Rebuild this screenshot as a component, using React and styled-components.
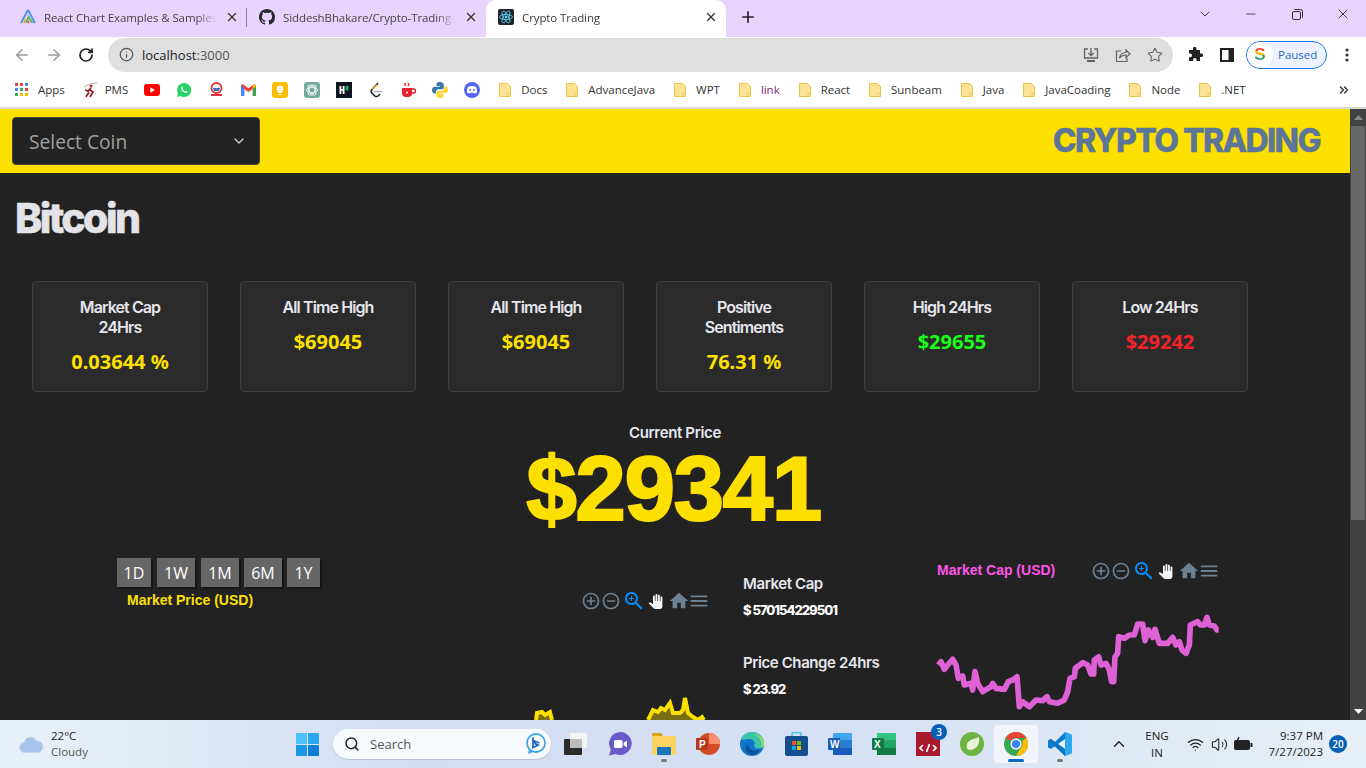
import React from "react";
import styled, { createGlobalStyle } from "styled-components";
import { X, Plus, ArrowLeft, ArrowRight, RotateCw, Info, ChevronDown, ChevronUp, Minus, Search, Star, ChevronsRight, Wifi, Volume2 } from "lucide-react";

const Global = createGlobalStyle`
  html, body { margin: 0; padding: 0; width: 1366px; height: 768px; overflow: hidden; background: #222; }
  * { box-sizing: border-box; }
  h1, h2, h3, p { margin: 0; }
`;
const UI = `"Open Sans", "Noto Sans", sans-serif`;
const Screen = styled.div`width:1366px;height:768px;display:flex;flex-direction:column;overflow:hidden;font-family:${UI};`;

/* browser chrome */
const TabStrip = styled.div`height:37px;background:#e8d3fd;display:flex;align-items:stretch;padding-left:8px;flex:none;`;
const Tab = styled.div`
  width:${p=>p.$w}px;display:flex;align-items:center;padding:0 8px 3px 12px;gap:8px;font-size:11.5px;letter-spacing:-.1px;color:${p=>p.$active?"#3c3c3c":"#444"};
  background:${p=>p.$active?"#fff":"transparent"};border-radius:${p=>p.$active?"10px 10px 0 0":"0"};position:relative;
  ${p=>p.$divider?`&::after{content:"";position:absolute;right:0;top:8px;height:19px;width:1px;background:#8b8296;}`:""}
`;
const TabLabel = styled.span`flex:1;min-width:0;white-space:nowrap;overflow:hidden;-webkit-mask-image:linear-gradient(90deg,#000 88%,transparent);mask-image:linear-gradient(90deg,#000 88%,transparent);`;
const NewTab = styled.div`width:44px;padding-bottom:3px;display:flex;align-items:center;justify-content:center;color:#222;`;
const WindowControls = styled.div`margin-left:auto;display:flex;align-items:flex-start;color:#333;`;
const WinBtn = styled.div`width:46px;height:28px;display:flex;align-items:center;justify-content:center;`;
const Toolbar = styled.div`height:35px;background:#fff;display:flex;align-items:center;padding-left:6px;flex:none;`;
const NavBtn = styled.div`width:32px;display:flex;justify-content:center;color:${p=>p.$dark?"#222":"#999"};`;
const UrlBar = styled.div`width:1065px;flex:none;height:34px;margin-left:6px;border-radius:17px;background:#dfdfdf;display:flex;align-items:center;padding:0 10px 0 11px;font-size:13px;color:#222;`;
const UrlText = styled.span`margin-left:8px;`;
const UrlPort = styled.span`color:#555;`;
const UrlActions = styled.div`margin-left:auto;display:flex;gap:16px;color:#5f6368;align-items:center;`;
const ExtGroup = styled.div`display:flex;align-items:center;margin-left:6px;`;
const ExtBtn = styled.div`width:32px;display:flex;justify-content:center;align-items:center;`;
const Paused = styled.div`width:81px;height:28px;margin-left:3px;border:1px solid #1a73e8;border-radius:14px;background:#edf3fd;display:flex;align-items:center;font-size:11.5px;color:#2a68c8;gap:5px;overflow:hidden;`;
const Avatar = styled.div`width:26px;height:26px;border-radius:50%;background:#fff;display:flex;align-items:center;justify-content:center;`;
const AvatarLetter = styled.span`font:700 17px "Liberation Sans",sans-serif;background:linear-gradient(180deg,#ea4335 0 32%,#fbbc04 32% 52%,#34a853 52% 72%,#4285f4 72%);-webkit-background-clip:text;background-clip:text;color:transparent;`;
const Kebab = styled.div`width:38px;display:flex;justify-content:center;color:#222;margin-left:1px;`;
const BookmarkBar = styled.div`height:37px;background:#fff;border-bottom:2px solid #d9d9d9;display:flex;align-items:center;padding-left:15px;font-size:11.5px;letter-spacing:-.03px;color:#333;flex:none;position:relative;`;
const Bookmark = styled.div`display:flex;align-items:center;gap:${p=>p.$gap??10}px;margin-right:${p=>p.$mr??19}px;white-space:nowrap;color:${p=>p.$color||"#333"};`;
const IconMark = styled.div`width:16px;height:16px;margin-right:16px;display:flex;align-items:center;justify-content:center;`;
const MoreMarks = styled.div`margin-left:auto;width:44px;display:flex;justify-content:center;color:#333;`;

/* page */
const Viewport = styled.div`flex:1;min-height:0;display:flex;`;
const Page = styled.main`width:1350px;background:#222;overflow:hidden;color:#e6e6ea;`;
const Scrollbar = styled.div`width:16px;background:#424242;display:flex;flex-direction:column;align-items:center;`;
const ScrollArrow = styled.div`height:17px;display:flex;align-items:center;justify-content:center;margin-top:${p=>p.$end?"auto":"0"};`;
const ScrollThumb = styled.div`width:14px;height:394px;background:#686868;`;
const Header = styled.header`height:64px;background:#fde000;display:flex;align-items:center;justify-content:space-between;padding:0 30px 0 12px;`;
const SelectBox = styled.div`width:248px;height:48px;background:#222;border:1px solid #444;border-radius:4px;display:flex;align-items:center;justify-content:space-between;padding:0 12px 0 16px;font-size:19.2px;color:#a0a0a0;`;
const Brand = styled.h1`font:800 32px/1 Inter,sans-serif;letter-spacing:-1.6px;color:#5b7699;-webkit-text-stroke:.3px #5b7699;`;
const CoinName = styled.h2`font:800 41px/48px Inter,sans-serif;letter-spacing:-2.6px;color:#e3e3e8;-webkit-text-stroke:.5px #e3e3e8;margin:21px 0 39px 15px;`;
const Cards = styled.section`display:flex;gap:32px;padding-left:32px;`;
const Card = styled.article`width:176px;height:111px;background:#2b2b2b;border:1px solid #3f3f3f;border-radius:4px;padding:15px 12px 0;text-align:center;`;
const CardTitle = styled.h3`font:600 16px/20px Inter,sans-serif;letter-spacing:-.9px;color:#e6e6ee;margin:0 auto;`;
const CardValue = styled.p`font:700 20px/28px "Noto Sans",sans-serif;color:${p=>p.$c||"#fde000"};margin-top:10.5px;`;
const Current = styled.section`text-align:center;margin-top:31px;`;
const CurrentLabel = styled.p`font:600 15px/20px Inter,sans-serif;letter-spacing:-.35px;color:#e6e6ee;`;
const Price = styled.p`font:700 91px/91px "Liberation Sans",sans-serif;letter-spacing:-1.5px;padding-right:3px;color:#fde000;-webkit-text-stroke:2px #fde000;`;
const ChartRow = styled.section`display:flex;align-items:flex-start;margin-top:24px;padding-left:117px;`;
const PriceChart = styled.div`width:593px;flex:none;`;
const RangeRow = styled.div`display:flex;gap:5px;height:29px;`;
const RangeBtn = styled.button`width:${p=>p.$w}px;height:29px;border:0;padding:0;background:#666;color:#fff;font:400 16px "Open Sans",sans-serif;box-shadow:2px 2px 0 #151515;margin-right:${p=>p.$mr||0}px;`;
const ChartHead = styled.div`display:flex;align-items:center;justify-content:space-between;height:${p=>p.$h}px;padding-left:${p=>p.$pl}px;`;
const ChartTitle = styled.span`font:700 14px "Liberation Sans",sans-serif;color:${p=>p.$c};margin-bottom:2px;`;
const Tools = styled.div`display:flex;align-items:center;`;
const ToolIcon = styled.svg`width:${p=>p.$s}px;height:${p=>p.$s}px;fill:${p=>p.$c};flex:none;margin-left:${p=>p.$ml||0}px;`;
const AreaSvg = styled.svg`display:block;width:591px;height:300px;`;
const Stats = styled.div`width:194px;margin-left:33px;padding-top:16px;flex:none;`;
const StatName = styled.h3`font:600 15px/20px Inter,sans-serif;letter-spacing:-.4px;color:#e6e6ee;`;
const StatValue = styled.p`font:800 13px/20px Inter,sans-serif;letter-spacing:-1px;color:#fff;margin:6px 0 33px;`;
const CapChart = styled.div`width:283px;flex:none;`;
const LineSvg = styled.svg`display:block;width:290px;height:110px;margin:26px 0 0 -1px;`;

/* taskbar */
const Taskbar = styled.footer`height:48px;flex:none;display:flex;align-items:center;background:linear-gradient(90deg,#e9f1f8 0%,#d3def4 30%,#d5e0f4 60%,#e7eff7 100%);color:#222;`;
const Weather = styled.div`display:flex;align-items:center;gap:7px;padding-left:19px;width:285px;flex:none;`;
const WeatherText = styled.div`font-size:11.5px;line-height:16px;`;
const Dim = styled.div`color:#555;`;
const Slot = styled.div`width:44px;height:38px;flex:none;display:flex;align-items:center;justify-content:center;position:relative;border-radius:4px;${p=>p.$active?"background:#f1f5fb;":""}`;
const Dot = styled.span`position:absolute;bottom:${p=>p.$b||1}px;left:50%;transform:translateX(-50%);height:3px;border-radius:2px;width:${p=>p.$w||6}px;background:${p=>p.$c||"#777"};`;
const Badge = styled.span`position:absolute;top:${p=>p.$t}px;right:${p=>p.$r}px;width:${p=>p.$s}px;height:${p=>p.$s}px;border-radius:50%;background:#0560b8;color:#fff;font:600 10px/${p=>p.$s}px "Open Sans",sans-serif;text-align:center;`;
const SearchPill = styled.div`width:218px;height:30px;margin:0 3px 0 4px;border-radius:15px;background:#f6f9fd;box-shadow:0 1px 1px #b4c0d4;display:flex;align-items:center;padding:0 5px 0 11px;gap:10px;font-size:13px;color:#555;flex:none;`;
const PillEnd = styled.div`margin-left:auto;display:flex;`;
const Tray = styled.div`margin-left:auto;display:flex;align-items:center;height:100%;padding-right:19px;position:relative;`;
const TrayChevron = styled.div`margin-right:11px;display:flex;`;
const Lang = styled.div`font-size:11.5px;line-height:17px;text-align:center;width:36px;margin:0 8px 0 0;`;
const TrayIcon = styled.div`width:24px;display:flex;justify-content:center;`;
const Clock = styled.div`font-size:11.5px;line-height:16px;text-align:right;margin:0 6px 0 0;width:68px;`;
const Notify = styled.div`width:18px;height:18px;border-radius:50%;background:#0560b8;color:#fff;font-size:10px;font-weight:600;line-height:18px;text-align:center;`;

const Folder = () => (<svg width="12" height="14" viewBox="0 0 12 14"><path d="M.5.5h8l3 3v10H.5z" fill="#fde293" stroke="#eec24a"/><rect x="9" y="10.5" width="2.5" height="3" fill="#fde293" stroke="#eec24a" strokeWidth=".7"/></svg>);
const AppsGrid = () => (<svg width="13" height="13" viewBox="0 0 13 13">{[0,5,10].flatMap((y,i)=>[0,5,10].map((x,j)=><rect key={`${i}${j}`} x={x} y={y} width="3" height="3" fill={[["#ea4335","#ea4335","#4285f4"],["#4285f4","#34a853","#ea4335"],["#34a853","#fbbc04","#fbbc04"]][i][j]}/>))}</svg>);
const AgIcon = () => (<svg width="16" height="16" viewBox="0 0 16 16" fill="none" strokeWidth="1.8"><path d="M1 14 8 1" stroke="#4a90e8"/><path d="M8 1l7 13" stroke="#4a90e8"/><path d="M6 14 8.500 8l4 6" stroke="#55b85c"/><path d="M4 14l2-4" stroke="#e8a33d"/><path d="M9 14l-1-2" stroke="#d55"/></svg>);
const GithubIcon = () => (<svg width="16" height="16" viewBox="0 0 16 16" fill="#24292f"><path d="M8 0C3.580 0 0 3.580 0 8c0 3.540 2.290 6.530 5.470 7.590.4.070.55-.17.55-.38 0-.19-.01-.82-.01-1.490-2.010.37-2.530-.49-2.690-.94-.09-.23-.48-.94-.82-1.130-.28-.15-.68-.52-.01-.53.63-.01 1.080.58 1.230.82.720 1.210 1.870.87 2.330.66.070-.52.28-.87.51-1.070-1.780-.2-3.640-.89-3.640-3.950 0-.87.31-1.590.82-2.150-.08-.2-.36-1.020.08-2.120 0 0 .67-.21 2.200.82.640-.18 1.320-.27 2-.27s1.360.09 2 .27c1.530-1.040 2.200-.82 2.200-.82.440 1.100.16 1.920.08 2.120.51.56.82 1.270.82 2.150 0 3.070-1.870 3.750-3.650 3.950.29.25.54.73.54 1.480 0 1.070-.01 1.930-.01 2.200 0 .21.15.46.55.38A8.010 8.010 0 0 0 16 8c0-4.420-3.580-8-8-8z"/></svg>);
const ReactIcon = () => (<svg width="16" height="16" viewBox="0 0 16 16"><rect width="16" height="16" rx="2" fill="#20232a"/><g fill="none" stroke="#61dafb" strokeWidth=".8"><ellipse cx="8" cy="8" rx="6.500" ry="2.600"/><ellipse cx="8" cy="8" rx="6.500" ry="2.600" transform="rotate(60 8 8)"/><ellipse cx="8" cy="8" rx="6.500" ry="2.600" transform="rotate(120 8 8)"/></g><circle cx="8" cy="8" r="1.400" fill="#61dafb"/></svg>);
const PmsIcon = () => (<svg width="16" height="16" viewBox="0 0 16 16" fill="none"><circle cx="9" cy="4" r="1.600" fill="#a33"/><path d="M9 6 6 9l-3-1M8 8l3 2-3 5M7 10l-3 5" stroke="#8b1a1a" strokeWidth="1.600"/><path d="M2 5c4-3 8-4 13-4" stroke="#999" strokeWidth=".8"/></svg>);
const Youtube = () => (<svg width="16" height="12" viewBox="0 0 16 12"><rect width="16" height="12" rx="3" fill="#f00"/><path d="M6.300 3.200v5.600L11 6z" fill="#fff"/></svg>);
const Whatsapp = () => (<svg width="14" height="14" viewBox="0 0 14 14"><path d="M7 0a7 7 0 0 0-6 10.500L0 14l3.600-1A7 7 0 1 0 7 0z" fill="#25d366"/><path d="M4.800 3.500c-.5.3-1 1-.8 2 .4 2 2.400 4 4.400 4.500 1 .2 1.800-.3 2.100-1 .1-.3 0-.5-.2-.6l-1.400-.7c-.2 0-.4 0-.5.2l-.5.6C7.200 8.100 6 7 5.600 6l.5-.6c.1-.2.1-.4 0-.5l-.6-1.300c-.2-.2-.5-.2-.7-.1z" fill="#fff"/></svg>);
const RedBadge = () => (<svg width="15" height="16" viewBox="0 0 15 16"><circle cx="7.500" cy="6" r="5" fill="none" stroke="#d33" strokeWidth="1.800"/><path d="M4 6h7l-1 3H5z" fill="#3b6fb5"/><path d="M2 13h11" stroke="#d33" strokeWidth="2"/></svg>);
const Gmail = () => (<svg width="15" height="12" viewBox="0 0 15 12"><path d="M0 1.500V12h3.200V5l4.300 3L11.800 5v7H15V1.500L13.500 0 7.500 4.300 1.500 0z" fill="#ea4335"/><path d="M0 1.500V12h3.200V4z" fill="#4285f4"/><path d="M15 1.500V12h-3.200V4z" fill="#34a853"/><path d="M11.800 5 15 2.500 13.500 0 11.800 1.200z" fill="#fbbc04"/></svg>);
const Keep = () => (<svg width="16" height="16" viewBox="0 0 16 16"><rect width="16" height="16" rx="3" fill="#fbbc04"/><path d="M8 3.500a3.500 3.500 0 0 0-2 6.400V11h4V9.900a3.500 3.500 0 0 0-2-6.400zM6.500 12h3v1h-3z" fill="#fff"/></svg>);
const Gpt = () => (<svg width="16" height="16" viewBox="0 0 16 16"><rect width="16" height="16" rx="3" fill="#74aa9c"/><g fill="none" stroke="#e8f3f0" strokeWidth="1"><ellipse cx="8" cy="8" rx="5.500" ry="2.800"/><ellipse cx="8" cy="8" rx="5.500" ry="2.800" transform="rotate(60 8 8)"/><ellipse cx="8" cy="8" rx="5.500" ry="2.800" transform="rotate(120 8 8)"/></g></svg>);
const Hacker = () => (<svg width="16" height="16" viewBox="0 0 16 16"><rect width="16" height="16" fill="#0e141e"/><path d="M3.500 4h1.800v3h1.400V4h1.800v8H6.700V8.800H5.300V12H3.500z" fill="#fff"/><rect x="9.500" y="4" width="3" height="4.500" fill="#1ba94c"/></svg>);
const Leet = () => (<svg width="15" height="16" viewBox="0 0 15 16" fill="none"><path d="M9 1 3 7.500c-1 1.200-1 2.800 0 3.800l2.500 2.500c1 1 2.800 1 3.800 0L11 12" stroke="#222" strokeWidth="1.600"/><path d="M5 9.500h8" stroke="#aaa" strokeWidth="1.400"/><path d="M3 7 8 3" stroke="#f89f1b" strokeWidth="1.600"/></svg>);
const Cup = () => (<svg width="15" height="16" viewBox="0 0 15 16"><path d="M1 6h10v5a4 4 0 0 1-4 4H5a4 4 0 0 1-4-4z" fill="#e8212e"/><path d="M11 7h1.500a1.700 1.700 0 0 1 0 4H11" fill="none" stroke="#e8212e" strokeWidth="1.500"/><path d="M4 1v3M7.500 1v3" stroke="#e8212e" strokeWidth="1.500"/><path d="M5 10.500h2M6 9.500v2" stroke="#fff" strokeWidth="1"/></svg>);
const Python = () => (<svg width="16" height="16" viewBox="0 0 16 16"><path d="M8 0C4.500 0 4.500 1.500 4.500 2.500V4H8v.7H3C1 4.700 0 6 0 8s1 3.500 2.700 3.500H4V9.700c0-1.400 1.200-2.500 2.500-2.500H10c1 0 1.700-.8 1.700-1.700V2.500C11.700 1 10 0 8 0z" fill="#3776ab"/><path d="M8 16c3.500 0 3.500-1.500 3.500-2.500V12H8v-.7h5c2 0 3-1.300 3-3.300s-1-3.500-2.700-3.500H12v1.800c0 1.400-1.200 2.500-2.500 2.500H6c-1 0-1.700.8-1.700 1.700v3C4.300 15 6 16 8 16z" fill="#ffd43b"/></svg>);
const Discord = () => (<svg width="16" height="16" viewBox="0 0 16 16"><circle cx="8" cy="8" r="8" fill="#5865f2"/><path d="M4 5c2.500-1.200 5.500-1.200 8 0 1 2 1.200 4 1 5.500-1 .7-2 1-2.700 1.200l-.6-1H6.300l-.6 1C5 11.500 4 11.200 3 10.500 2.800 9 3 7 4 5z" fill="#fff"/><circle cx="6.200" cy="8" r="1" fill="#5865f2"/><circle cx="9.800" cy="8" r="1" fill="#5865f2"/></svg>);
const DownloadPc = () => (<svg width="16" height="16" viewBox="0 0 16 16" fill="none" stroke="#5f6368" strokeWidth="1.300"><path d="M5 2H1.500v9h13V2H11"/><path d="M8 1v7M5.500 6 8 8.500 10.500 6"/><path d="M4 14h8" strokeWidth="2"/></svg>);
const ShareBox = () => (<svg width="16" height="16" viewBox="0 0 16 16" fill="none" stroke="#5f6368" strokeWidth="1.200"><path d="M6 4H1.500v10.500H12V11"/><path d="M4.500 11c.5-3.500 3-5.500 6.500-5.500V3l4 4-4 3.500V8c-3 0-5 1-6.500 3z"/></svg>);
const Puzzle = () => (<svg width="16" height="16" viewBox="0 0 16 16" fill="#222"><path d="M6 1.500a1.700 1.700 0 0 1 3.400 0V3H13v3.500h1.300a1.800 1.800 0 0 1 0 3.600H13V14H9.500v-1.300a1.700 1.700 0 0 0-3.400 0V14H2v-3.800h1.200a1.800 1.800 0 0 0 0-3.600H2V3h4z"/></svg>);
const SidePanel = () => (<svg width="14" height="14" viewBox="0 0 14 14"><rect width="14" height="14" fill="#222"/><rect x="2" y="2" width="6.500" height="10" fill="#fff"/></svg>);
const Dots = () => (<svg width="4" height="14" viewBox="0 0 4 14" fill="#333"><circle cx="2" cy="2" r="1.600"/><circle cx="2" cy="7" r="1.600"/><circle cx="2" cy="12" r="1.600"/></svg>);
const Restore = () => (<svg width="11" height="11" viewBox="0 0 11 11" fill="none" stroke="#333"><rect x=".5" y="2.500" width="8" height="8" rx="1.500"/><path d="M2.500 .5h6a2 2 0 0 1 2 2v6"/></svg>);
const Tri = ({up}) => (<svg width="9" height="5" viewBox="0 0 9 5"><path d={up?"M0 5 4.500 0 9 5z":"M0 0h9L4.500 5z"} fill={up?"#8a8a8a":"#fff"}/></svg>);

const Cloud = () => (<svg width="25" height="17" viewBox="0 0 25 17"><path d="M6 16.500a5 5 0 0 1-.8-10A6.500 6.500 0 0 1 17.500 5a5.300 5.300 0 0 1 1.500 11.500z" fill="#a9c4ec" stroke="#c5d8f3"/></svg>);
const WinLogo = () => (<svg width="23" height="23" viewBox="0 0 23 23">{[[0,0,"#4cc2f8"],[12,0,"#29a8ef"],[0,12,"#1b97e6"],[12,12,"#0a7fd8"]].map(([x,y,c])=><rect key={x+"-"+y} x={x} y={y} width="11" height="11" fill={c} rx=".5"/>)}</svg>);
const Bing = () => (<svg width="21" height="22" viewBox="0 0 21 22"><circle cx="11" cy="10" r="9" fill="#fff" stroke="#3fa6ea" strokeWidth="1.800"/><path d="M8 4.500v10l5-2.500-2.500-1.200-1-2.800 5 2" fill="none" stroke="#1666c9" strokeWidth="1.800"/><path d="M4 16l-1 5 5-2z" fill="#3fa6ea"/></svg>);
const TaskView = () => (<svg width="24" height="22" viewBox="0 0 24 22"><rect x="6" y="0" width="17" height="15" rx="1" fill="#f5f5f5"/><rect x="0" y="6" width="18" height="16" rx="1" fill="#2a2a2a"/><rect x="6" y="6" width="12" height="9" fill="#bdbdbd"/></svg>);
const Teams = () => (<svg width="24" height="24" viewBox="0 0 24 24"><path d="M12.500 0a11.500 11.500 0 1 1-5 22L1 23.500l1.800-6A11.500 11.500 0 0 1 12.500 0z" fill="#6a5bc9"/><rect x="6" y="8" width="8.500" height="8" rx="1.500" fill="#fff"/><path d="M15.500 11l3.500-2.500v7L15.500 13z" fill="#fff"/></svg>);
const Explorer = () => (<svg width="24" height="22" viewBox="0 0 24 22"><path d="M0 1.500A1.500 1.500 0 0 1 1.500 0H9l2 3H0z" fill="#d9a00f"/><path d="M0 3h24v17.500a1.500 1.500 0 0 1-1.500 1.500h-21A1.500 1.500 0 0 1 0 20.500z" fill="#fcd462"/><rect x="5" y="14" width="14" height="8" rx="1" fill="#1a73bd"/></svg>);
const Ppt = () => (<svg width="24" height="24" viewBox="0 0 24 24"><circle cx="13" cy="12" r="11" fill="#d24c27"/><path d="M13 1a11 11 0 0 1 11 11H13z" fill="#ff8f6b"/><rect x="0" y="6" width="12" height="12" rx="1" fill="#b7381a"/><text x="3" y="15.500" fill="#fff" fontSize="10" fontWeight="700" fontFamily="Liberation Sans">P</text></svg>);
const Edge = () => (<svg width="24" height="24" viewBox="0 0 24 24"><circle cx="12" cy="12" r="12" fill="#1173c8"/><path d="M1 8C3 2 8 0 12 0c6 0 12 4 12 12 0 4-4 5-6.500 4.500C14 16 13 13 15 12c0-3-3-5-6-5-3 0-6 1-8 1z" fill="#3cc6a8"/><path d="M14 2c5 0 10 4 10 10 0 2-1 3.500-3 4 2-4 0-11-7-14z" fill="#8ee05e"/><path d="M8 12c0 5 5 8 10 6l1 1c-2 3-7 5-11 2-3-2-3-7 0-9z" fill="#0c4f94"/></svg>);
const Store = () => (<svg width="23" height="24" viewBox="0 0 23 24"><path d="M7 4V2a1.500 1.500 0 0 1 1.500-1.500h6A1.500 1.500 0 0 1 16 2v2" fill="none" stroke="#3fc4e8" strokeWidth="1.500"/><rect y="4" width="23" height="20" rx="2" fill="#124f8c"/><rect x="7" y="9" width="4" height="4" fill="#f25022"/><rect x="12" y="9" width="4" height="4" fill="#7fba00"/><rect x="7" y="14" width="4" height="4" fill="#00a4ef"/><rect x="12" y="14" width="4" height="4" fill="#ffb900"/></svg>);
const Office = ({a,b,c,d,l}) => (<svg width="24" height="22" viewBox="0 0 24 22"><rect x="5" width="19" height="22" rx="1" fill={a}/><rect x="5" y="7" width="19" height="8" fill={b}/><rect x="5" y="15" width="19" height="7" fill={c}/><rect y="5" width="12" height="12" rx="1" fill={d}/><text x="2" y="15" fill="#fff" fontSize="10" fontWeight="700" fontFamily="Liberation Sans">{l}</text></svg>);
const DevIcon = () => (<svg width="24" height="24" viewBox="0 0 24 24"><rect width="24" height="24" fill="#a6192e"/><path d="M7 13l-3 3 3 3M17 13l3 3-3 3M13.500 12l-3 8" fill="none" stroke="#fff" strokeWidth="1.700"/></svg>);
const Spring = () => (<svg width="24" height="24" viewBox="0 0 24 24"><circle cx="12" cy="12" r="12" fill="#6db33f"/><path d="M19 5c1 6-1 12-9 13-3 0-4-3-3-6 1-4 7-5 12-7z" fill="#e8f3dc"/></svg>);
const Chrome = () => (<svg width="24" height="24" viewBox="0 0 24 24"><circle cx="12" cy="12" r="12" fill="#34a853"/><path d="M12 0a12 12 0 0 1 10.400 6H12a6 6 0 0 0-5.200 3L1.600 6A12 12 0 0 1 12 0z" fill="#ea4335"/><path d="M22.400 6A12 12 0 0 1 12 24l5.200-9A6 6 0 0 0 18 9z" fill="#fbbc04"/><circle cx="12" cy="12" r="5.500" fill="#fff"/><circle cx="12" cy="12" r="4.300" fill="#4285f4"/></svg>);
const Vscode = () => (<svg width="24" height="24" viewBox="0 0 24 24"><path d="M17 0 7 10 3 7 0 8.500v7L3 17l4-3 10 10 7-3V3z" fill="#0a7fd0"/><path d="M17 0l7 3v18l-7 3z" fill="#2ba8ee"/><path d="M17 7 10 12l7 5z" fill="#e7eff7"/><path d="M0 8.500 3 7l14 10v7z" fill="#0a6cb5" opacity=".6"/></svg>);
const Battery = () => (<svg width="20" height="14" viewBox="0 0 20 14"><rect x="1" y="3" width="16" height="10" rx="2" fill="#222"/><rect x="17.500" y="6" width="2" height="4" fill="#222"/><path d="M6 0 3 6h3L4 10" stroke="#222" fill="none" strokeWidth="1.400"/></svg>);

const PLUS="M13 7h-2v4H7v2h4v4h2v-4h4v-2h-4V7zm-1-5C6.480 2 2 6.480 2 12s4.480 10 10 10 10-4.480 10-10S17.520 2 12 2zm0 18c-4.410 0-8-3.590-8-8s3.590-8 8-8 8 3.590 8 8-3.590 8-8 8z";
const MINUS="M7 11v2h10v-2H7zm5-9C6.480 2 2 6.480 2 12s4.480 10 10 10 10-4.480 10-10S17.520 2 12 2zm0 18c-4.410 0-8-3.590-8-8s3.590-8 8-8 8 3.590 8 8-3.590 8-8 8z";
const ZOOM="M15.500 14h-.79l-.28-.27C15.410 12.590 16 11.110 16 9.500 16 5.910 13.090 3 9.500 3S3 5.910 3 9.500 5.910 16 9.500 16c1.610 0 3.090-.59 4.230-1.570l.27.28v.79l5 4.990L20.490 19l-4.990-5zm-6 0C7.010 14 5 11.990 5 9.500S7.010 5 9.500 5 14 7.010 14 9.500 11.990 14 9.500 14zM12 10h-2v2H9v-2H7V9h2V7h1v2h2v1z";
const HAND="M23 5.500V20c0 2.200-1.800 4-4 4h-7.300c-1.080 0-2.100-.43-2.850-1.190L1 14.830s1.260-1.230 1.300-1.250c.22-.19.490-.29.790-.29.220 0 .420.060.600.160.040.010 4.310 2.460 4.310 2.460V4c0-.83.670-1.500 1.500-1.500S11 3.170 11 4v7h1V1.500c0-.83.670-1.500 1.500-1.500S15 .67 15 1.500V11h1V2.500c0-.83.670-1.500 1.500-1.500s1.500.67 1.500 1.500V11h1V5.500c0-.83.670-1.500 1.500-1.500s1.500.67 1.500 1.500z";
const HOME="M10 20v-6h4v6h5v-8h3L12 3 2 12h3v8z";
const MENU="M3 18h18v-2H3v2zm0-5h18v-2H3v2zm0-7v2h18V6H3z";
const ChartTools = () => (
  <Tools>
    <ToolIcon $s={20} $c="#6e8192" viewBox="0 0 24 24"><path d={PLUS}/></ToolIcon>
    <ToolIcon $s={20} $c="#6e8192" viewBox="0 0 24 24"><path d={MINUS}/></ToolIcon>
    <ToolIcon $s={24} $c="#008ffb" viewBox="0 0 24 24" $ml={1}><path d={ZOOM}/></ToolIcon>
    <ToolIcon $s={15} $c="#f4f4f4" viewBox="0 0 24 24" $ml={2}><path d={HAND}/></ToolIcon>
    <ToolIcon $s={22} $c="#6e8192" viewBox="0 0 24 24" $ml={5.5}><path d={HOME}/></ToolIcon>
    <ToolIcon $s={22} $c="#6e8192" viewBox="0 0 24 24" $ml={-2}><path d={MENU}/></ToolIcon>
  </Tools>
);

const cap=[[52,345],[60,335],[70,358],[80,345],[95,328],[105,345],[112,385],[125,378],[130,405],[150,400],[155,420],[162,365],[170,400],[185,425],[210,410],[215,400],[225,415],[250,418],[262,395],[275,390],[288,380],[295,470],[305,455],[325,470],[345,450],[365,452],[378,440],[385,455],[410,460],[430,450],[440,425],[447,385],[460,380],[463,355],[485,338],[500,345],[510,372],[518,372],[520,330],[533,320],[540,345],[555,340],[565,360],[572,395],[578,395],[582,320],[590,310],[593,260],[610,265],[625,255],[640,255],[650,222],[665,222],[672,272],[682,240],[695,262],[702,238],[715,280],[740,280],[755,262],[765,285],[775,275],[783,300],[795,310],[805,285],[808,225],[830,215],[838,225],[850,225],[858,202],[865,225],[880,228],[888,240],[893,240]].map(p=>p.join(",")).join(" ");
const seriesA="419,105 420,98 425,97 428,100 433,97 435,105";
const seriesB="531,105 536,95 541,97 544,93 548,95 553,88 556,98 563,98 566,95 568,83 571,98 576,102 581,105 585,102 587,105";

const cards=[
  {t:["Market Cap","24Hrs"],v:"0.03644 %"},
  {t:["All Time High"],v:"$69045"},
  {t:["All Time High"],v:"$69045"},
  {t:["Positive","Sentiments"],v:"76.31 %"},
  {t:["High 24Hrs"],v:"$29655",c:"#1aff1a"},
  {t:["Low 24Hrs"],v:"$29242",c:"#f6222a"},
];
const folders=[["Docs"],["AdvanceJava"],["WPT"],["link","#7b1f7b"],["React"],["Sunbeam"],["Java"],["JavaCoading"],["Node"],[".NET"]];
const marks=[Youtube,Whatsapp,RedBadge,Gmail,Keep,Gpt,Hacker,Leet,Cup,Python,Discord];
const ranges=[["1D",34,1],["1W",38,1],["1M",38,0],["6M",38,0],["1Y",33,0]];

export default function App(){
  return (<>
    <Global/>
    <Screen>
      <TabStrip>
        <Tab $w={239} $divider><AgIcon/><TabLabel>React Chart Examples &amp; Samples Docs</TabLabel><X size={14} color="#333" strokeWidth={2.2}/></Tab>
        <Tab $w={239}><GithubIcon/><TabLabel>SiddeshBhakare/Crypto-Trading-Web</TabLabel><X size={14} color="#333" strokeWidth={2.2}/></Tab>
        <Tab $w={240} $active><ReactIcon/><TabLabel>Crypto Trading</TabLabel><X size={14} color="#333" strokeWidth={2.2}/></Tab>
        <NewTab><Plus size={18} strokeWidth={2.2}/></NewTab>
        <WindowControls>
          <WinBtn><ChevronDown size={16} strokeWidth={1.4}/></WinBtn>
          <WinBtn><Minus size={14} strokeWidth={1.4}/></WinBtn>
          <WinBtn><Restore/></WinBtn>
          <WinBtn><X size={16} strokeWidth={1.4}/></WinBtn>
        </WindowControls>
      </TabStrip>
      <Toolbar>
        <NavBtn><ArrowLeft size={18}/></NavBtn>
        <NavBtn><ArrowRight size={18}/></NavBtn>
        <NavBtn $dark><RotateCw size={16} strokeWidth={2.6}/></NavBtn>
        <UrlBar>
          <Info size={15} color="#555"/>
          <UrlText>localhost<UrlPort>:3000</UrlPort></UrlText>
          <UrlActions><DownloadPc/><ShareBox/><Star size={16} strokeWidth={1.6}/></UrlActions>
        </UrlBar>
        <ExtGroup>
          <ExtBtn><Puzzle/></ExtBtn>
          <ExtBtn><SidePanel/></ExtBtn>
          <Paused><Avatar><AvatarLetter>S</AvatarLetter></Avatar>Paused</Paused>
          <Kebab><Dots/></Kebab>
        </ExtGroup>
      </Toolbar>
      <BookmarkBar>
        <Bookmark $mr={17}><AppsGrid/>Apps</Bookmark>
        <Bookmark $mr={16} $gap={7}><PmsIcon/><span>PMS</span></Bookmark>
        {marks.map((M,i)=><IconMark key={i}><M/></IconMark>)}
        <Bookmark $mr={3}/>
        {folders.map(([f,c])=><Bookmark key={f} $color={c}><Folder/>{f}</Bookmark>)}
        <MoreMarks><ChevronsRight size={14} strokeWidth={2.4}/></MoreMarks>
      </BookmarkBar>
      <Viewport>
        <Page>
          <Header>
            <SelectBox>Select Coin<ChevronDown size={16} color="#ccc"/></SelectBox>
            <Brand>CRYPTO TRADING</Brand>
          </Header>
          <CoinName>Bitcoin</CoinName>
          <Cards>
            {cards.map((c,i)=>(
              <Card key={i}>
                <CardTitle>{c.t.map(l=><div key={l}>{l}</div>)}</CardTitle>
                <CardValue $c={c.c}>{c.v}</CardValue>
              </Card>
            ))}
          </Cards>
          <Current>
            <CurrentLabel>Current Price</CurrentLabel>
            <Price>$29341</Price>
          </Current>
          <ChartRow>
            <PriceChart>
              <RangeRow>{ranges.map(([r,w,m])=><RangeBtn key={r} $w={w} $mr={m}>{r}</RangeBtn>)}</RangeRow>
              <ChartHead $h={28} $pl={10}>
                <ChartTitle $c="#fde000">Market Price (USD)</ChartTitle>
                <ChartTools/>
              </ChartHead>
              <AreaSvg viewBox="0 0 591 300">
                <path d={`M${seriesA} V300 H419Z`} fill="#fde000" fillOpacity=".4" stroke="none"/>
                <path d={`M${seriesB} V300 H531Z`} fill="#fde000" fillOpacity=".4" stroke="none"/>
                <polyline points={seriesA} fill="none" stroke="#fde000" strokeWidth="4"/>
                <polyline points={seriesB} fill="none" stroke="#fde000" strokeWidth="4"/>
              </AreaSvg>
            </PriceChart>
            <Stats>
              <StatName>Market Cap</StatName>
              <StatValue>$ 570154229501</StatValue>
              <StatName>Price Change 24hrs</StatName>
              <StatValue>$ 23.92</StatValue>
            </Stats>
            <CapChart>
              <ChartHead $h={26} $pl={0}>
                <ChartTitle $c="#ff55e8">Market Cap (USD)</ChartTitle>
                <ChartTools/>
              </ChartHead>
              <LineSvg viewBox="45 180 870 330"><polyline points={cap} fill="none" stroke="#df61d6" strokeWidth="17" strokeLinejoin="round" strokeLinecap="butt"/></LineSvg>
            </CapChart>
          </ChartRow>
        </Page>
        <Scrollbar>
          <ScrollArrow><Tri up/></ScrollArrow>
          <ScrollThumb/>
          <ScrollArrow $end><Tri/></ScrollArrow>
        </Scrollbar>
      </Viewport>
      <Taskbar>
        <Weather><Cloud/><WeatherText>22°C<Dim>Cloudy</Dim></WeatherText></Weather>
        <Slot><WinLogo/></Slot>
        <SearchPill><Search size={16} color="#222" strokeWidth={2.2}/>Search<PillEnd><Bing/></PillEnd></SearchPill>
        <Slot><TaskView/></Slot>
        <Slot><Teams/></Slot>
        <Slot><Explorer/><Dot/></Slot>
        <Slot><Ppt/></Slot>
        <Slot><Edge/></Slot>
        <Slot><Store/></Slot>
        <Slot><Office a="#41a5ee" b="#2b7cd3" c="#185abd" d="#1a5bb5" l="W"/></Slot>
        <Slot><Office a="#33c481" b="#21a366" c="#107c41" d="#107c41" l="X"/></Slot>
        <Slot><DevIcon/><Badge $t={-1} $r={3} $s={16}>3</Badge></Slot>
        <Slot><Spring/></Slot>
        <Slot $active><Chrome/><Dot $w={16} $c="#0a67c2"/></Slot>
        <Slot><Vscode/><Dot/></Slot>
        <Tray>
          <TrayChevron><ChevronUp size={18} strokeWidth={1.8}/></TrayChevron>
          <Lang>ENG<br/>IN</Lang>
          <TrayIcon><Wifi size={17} strokeWidth={1.8}/></TrayIcon>
          <TrayIcon><Volume2 size={17} strokeWidth={1.5}/></TrayIcon>
          <TrayIcon><Battery/></TrayIcon>
          <Clock>9:37 PM<br/>7/27/2023</Clock>
          <Notify>20</Notify>
        </Tray>
      </Taskbar>
    </Screen>
  </>);
}
